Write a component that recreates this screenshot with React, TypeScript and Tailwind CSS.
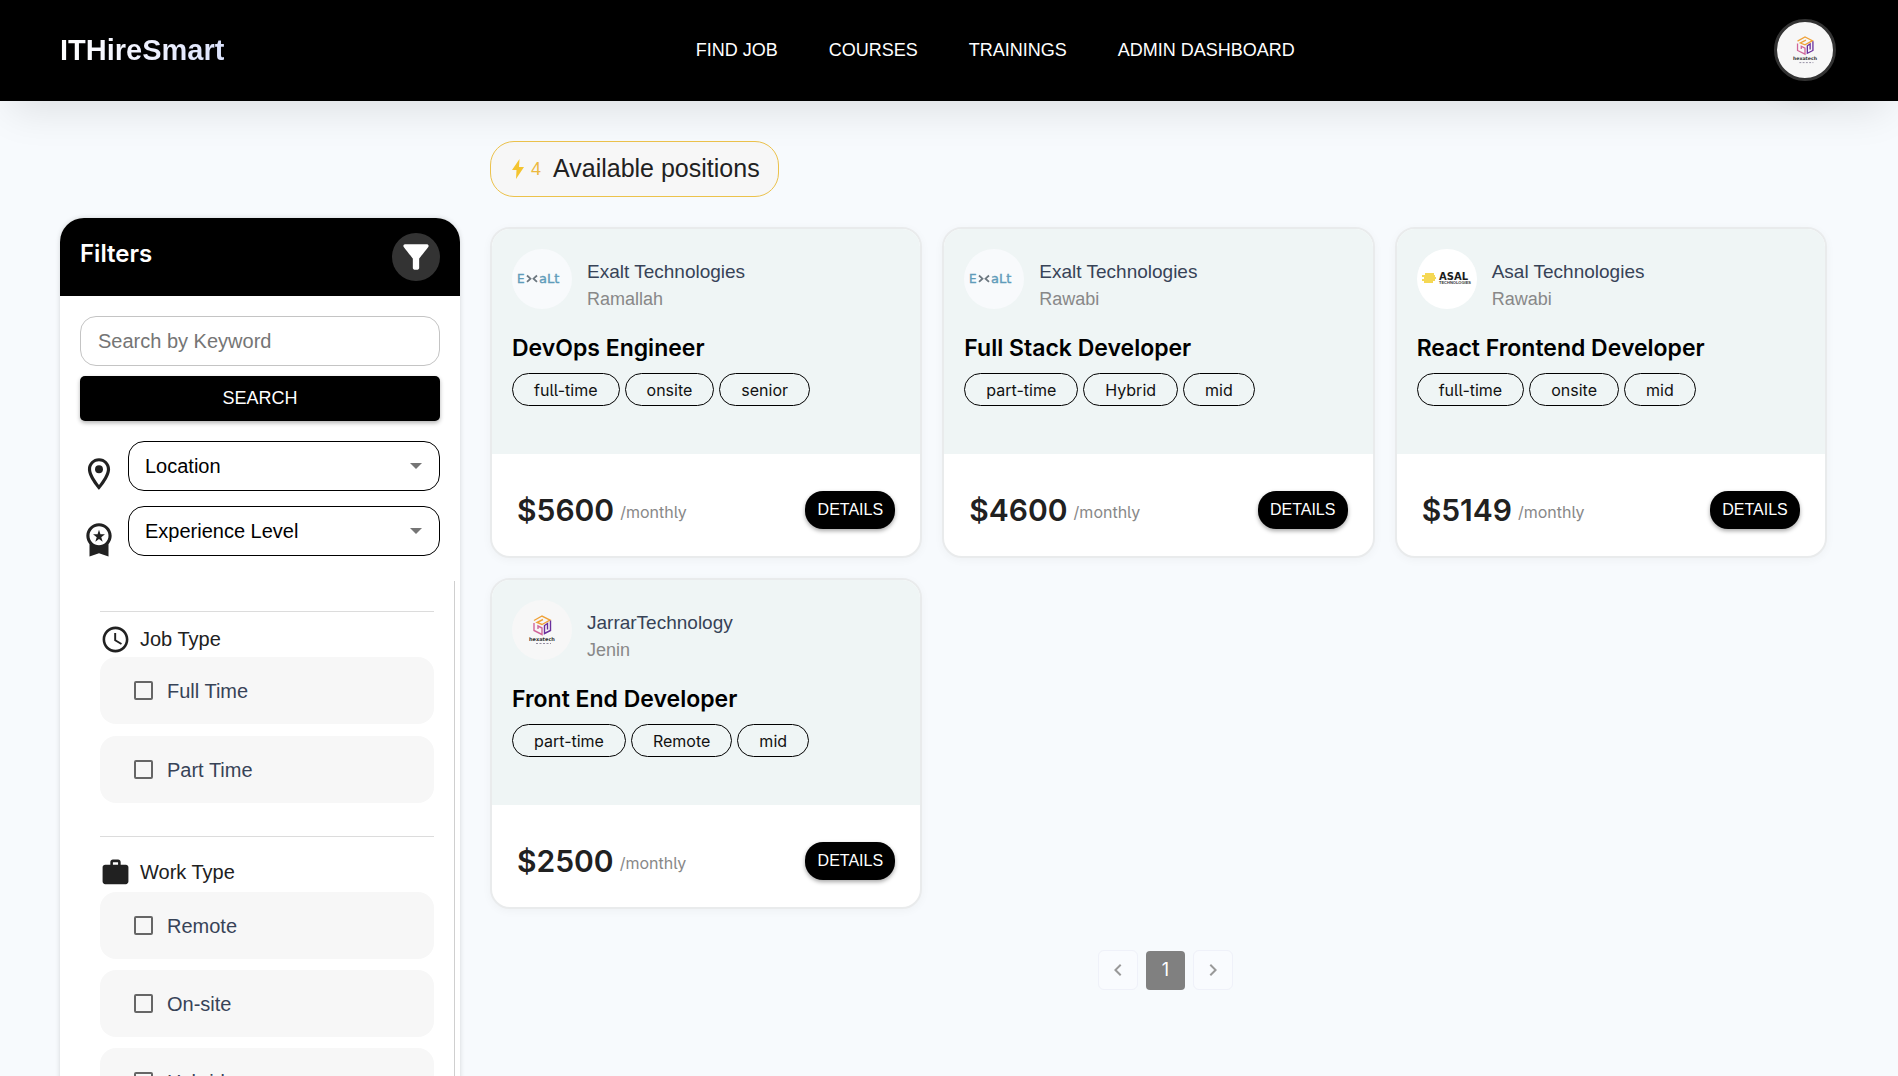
import React, { useId, useState } from "react";
import {
  MdAccessTime,
  MdChevronLeft,
  MdChevronRight,
  MdFilterAlt,
  MdOutlineLocationOn,
  MdWork,
} from "react-icons/md";

type LogoKind = "exalt" | "asal" | "hex";

interface Job {
  company: string;
  city: string;
  title: string;
  tags: string[];
  salary: number;
  logo: LogoKind;
}

const jobs: Job[] = [
  { company: "Exalt Technologies", city: "Ramallah", title: "DevOps Engineer", tags: ["full-time", "onsite", "senior"], salary: 5600, logo: "exalt" },
  { company: "Exalt Technologies", city: "Rawabi", title: "Full Stack Developer", tags: ["part-time", "Hybrid", "mid"], salary: 4600, logo: "exalt" },
  { company: "Asal Technologies", city: "Rawabi", title: "React Frontend Developer", tags: ["full-time", "onsite", "mid"], salary: 5149, logo: "asal" },
  { company: "JarrarTechnology", city: "Jenin", title: "Front End Developer", tags: ["part-time", "Remote", "mid"], salary: 2500, logo: "hex" },
];

const navItems = ["FIND JOB", "COURSES", "TRAININGS", "ADMIN DASHBOARD"];

function HexLogo() {
  return (
    <svg viewBox="0 0 60 60" className="size-full" aria-hidden="true">
      <g fill="none" strokeWidth="1.4">
        <path stroke="#efa23a" d="M22 20.500l8-4.500 8 4-8 4.500-5-2 6-3" />
        <path stroke="#d0669a" d="M22 23v7.500l8 4v-6.500l-4-2v3" />
        <path stroke="#6a2f9c" d="M38.500 20.500v10l-6 3v-8l3-2v6" />
      </g>
      <text x="30" y="41" textAnchor="middle" fontSize="5" fontWeight="700" fill="#333" fontFamily="DejaVu Sans, sans-serif">hexatech</text>
      <path stroke="#77708a" strokeWidth="0.8" strokeDasharray="2 1.5" d="M24 43.500h15" />
    </svg>
  );
}

function ExaltLogo() {
  return (
    <svg viewBox="0 0 60 60" className="size-full" aria-hidden="true">
      <text x="5" y="34" fontSize="12" fill="#5f9cba" stroke="#5f9cba" strokeWidth="0.4" fontFamily="DejaVu Sans, sans-serif">E</text>
      <g fill="none" stroke="#6d7880" strokeWidth="1.8">
        <path d="M15 26.500l3.500 3.200-3.500 3.200M25 26.500l-3.500 3.200 3.500 3.200" />
      </g>
      <text x="27" y="34" fontSize="13" fill="#5f9cba" stroke="#5f9cba" strokeWidth="0.4" fontFamily="DejaVu Sans, sans-serif">aLt</text>
    </svg>
  );
}

function AsalLogo() {
  return (
    <svg viewBox="0 0 60 60" className="size-full" aria-hidden="true">
      <path stroke="#f2cb1d" strokeWidth="1.7" d="M8 25h9M5 27h13M7 29h12M5 31h13M7 33h9" />
      <text x="22" y="31" fontSize="10" fontWeight="700" fill="#1c1c1c" fontFamily="DejaVu Sans, sans-serif">ASAL</text>
      <text x="22" y="35" fontSize="4" fontWeight="700" fill="#333" fontFamily="Liberation Sans, sans-serif">TECHNOLOGIES</text>
    </svg>
  );
}

function CompanyLogo({ kind }: { kind: LogoKind }) {
  const tone = kind === "asal" ? "bg-white" : kind === "exalt" ? "bg-[#f8fafc]" : "bg-[#f7f7f7]";
  return (
    <div className={`size-15 shrink-0 overflow-hidden rounded-full ${tone}`}>
      {kind === "exalt" && <ExaltLogo />}
      {kind === "asal" && <AsalLogo />}
      {kind === "hex" && <HexLogo />}
    </div>
  );
}

function AwardIcon() {
  return (
    <svg viewBox="0 0 24 24" className="size-[38px]" fill="currentColor" aria-hidden="true">
      <path d="M9.680 13.690 12 11.930l2.310 1.760-.88-2.850L15.750 9h-2.840L12 6.190 11.090 9H8.250l2.310 1.840-.88 2.850z" />
      <path fillRule="evenodd" d="M20 10c0-4.420-3.580-8-8-8s-8 3.580-8 8c0 2.030.76 3.870 2 5.280V23l6-2 6 2v-7.720c1.240-1.410 2-3.250 2-5.280zm-8-6c3.310 0 6 2.690 6 6s-2.690 6-6 6-6-2.690-6-6 2.690-6 6-6z" />
    </svg>
  );
}

function Header() {
  return (
    <header className="relative flex items-center justify-between bg-black pt-[19px] pr-[62px] pb-5 pl-[60px] shadow-[0_20px_40px_-10px_rgba(0,0,0,0.1)]">
      <a href="#" className="bg-linear-to-r from-white via-[#f0f2ff] to-[#dbe2fb] bg-clip-text text-[29px] leading-9 font-bold text-transparent">
        ITHireSmart
      </a>
      <nav className="flex gap-[51px] pr-2 text-lg text-white">
        {navItems.map((item) => (
          <a key={item} href="#">{item}</a>
        ))}
      </nav>
      <button type="button" aria-label="Account" className="size-[62px] overflow-hidden rounded-full border-3 border-[#333] bg-[#f7f7f7] shadow-[0_10px_30px_rgba(0,0,0,0.15)]">
        <HexLogo />
      </button>
    </header>
  );
}

function FilterSelect({ label, icon }: { label: string; icon: React.ReactNode }) {
  return (
    <div className="flex items-end justify-between">
      <span className="flex w-[38px] justify-center text-[#212121]">{icon}</span>
      <div className="relative mb-0.5 w-[312px]">
        <select aria-label={label} className="h-[50px] w-full appearance-none rounded-2xl border border-black bg-white px-4 text-xl text-black">
          <option>{label}</option>
        </select>
        <svg viewBox="0 0 12 6" className="pointer-events-none absolute top-[22px] right-[18px] h-[6px] w-3 fill-[#757575]" aria-hidden="true">
          <path d="M0 0l6 6 6-6z" />
        </svg>
      </div>
    </div>
  );
}

function CheckOption({ label }: { label: string }) {
  const id = useId();
  const [checked, setChecked] = useState(false);
  return (
    <div className="flex h-[67px] items-center gap-[14px] rounded-2xl bg-[#f7f7f7] pl-[34px]">
      <input
        id={id}
        type="checkbox"
        checked={checked}
        onChange={() => setChecked(!checked)}
        className="size-[19px] appearance-none rounded-xs border-2 border-[#666] checked:bg-[#666]"
      />
      <label htmlFor={id} className="text-xl text-[#374357]">{label}</label>
    </div>
  );
}

function Sidebar() {
  return (
    <aside className="mt-[117px] w-[400px] shrink-0 rounded-t-3xl bg-white shadow-[0_0_5px_rgba(0,0,0,0.15)]">
      <div className="flex h-[78px] items-center justify-between rounded-t-3xl bg-black px-5">
        <h2 className="pb-1.5 font-[Inter] text-2xl leading-8 font-semibold text-white">Filters</h2>
        <button type="button" aria-label="Toggle filters" className="flex size-12 items-center justify-center rounded-full bg-[#333] text-white">
          <MdFilterAlt size={38} />
        </button>
      </div>
      <form className="px-5 pt-5" onSubmit={(e) => e.preventDefault()}>
        <input
          type="text"
          aria-label="Search by Keyword"
          placeholder="Search by Keyword"
          className="h-[50px] w-full rounded-2xl border border-[#c4c4c4] px-[17px] text-xl placeholder:text-[#757575]"
        />
        <button type="submit" className="mt-[10px] h-[45px] w-full rounded-[5px] bg-black pb-0.5 text-lg text-white shadow-[0_2px_4px_rgba(0,0,0,0.3)]">
          SEARCH
        </button>
        <div className="mt-5 flex flex-col gap-[13px]">
          <FilterSelect label="Location" icon={<MdOutlineLocationOn size={38} />} />
          <FilterSelect label="Experience Level" icon={<AwardIcon />} />
        </div>
      </form>
      <div className="mt-[23px] mr-[5px] border-r border-[#cfcfcf] pt-[30px] pr-[20px] pl-10">
        <fieldset className="border-t border-[#dcdcdc]">
          <div className="flex h-[45px] items-end gap-[9px] pb-0.5 text-xl leading-8 text-[#212121]">
            <MdAccessTime size={31} />
            Job Type
          </div>
          <div className="flex flex-col gap-3 pb-[33px]">
            <CheckOption label="Full Time" />
            <CheckOption label="Part Time" />
          </div>
        </fieldset>
        <fieldset className="border-t border-[#dcdcdc]">
          <div className="flex h-[55px] items-end gap-[9px] pb-1 text-xl leading-8 text-[#212121]">
            <MdWork size={31} />
            Work Type
          </div>
          <div className="flex flex-col gap-[11px] pb-8">
            <CheckOption label="Remote" />
            <CheckOption label="On-site" />
            <CheckOption label="Hybrid" />
          </div>
        </fieldset>
      </div>
    </aside>
  );
}

function JobCard({ job }: { job: Job }) {
  return (
    <article className="overflow-hidden rounded-[20px] border-2 border-[#e9ebec] bg-white shadow-[0_2px_10px_rgba(0,0,0,0.04)]">
      <div className="bg-[#eff5f5] px-5 pt-5 pb-12">
        <div className="flex gap-[15px]">
          <CompanyLogo kind={job.logo} />
          <div className="pt-[10px] leading-[26px]">
            <p className="text-[19px] text-[#374357]">{job.company}</p>
            <p className="text-lg text-[#888]">{job.city}</p>
          </div>
        </div>
        <h3 className="mt-[18px] font-[Inter] text-[23px] leading-[34px] font-semibold text-black">{job.title}</h3>
        <ul className="mt-2 flex gap-[5px]">
          {job.tags.map((tag) => (
            <li key={tag} className="flex h-[33px] items-center rounded-full border border-black px-[21px] font-[Inter] text-base text-[#111] [font-feature-settings:'cv05']">
              {tag}
            </li>
          ))}
        </ul>
      </div>
      <div className="flex h-[102px] items-center justify-between px-[25px] pt-[9px]">
        <p className="flex items-center gap-[6px] font-[Inter] text-[#888] [font-feature-settings:'cv05']">
          <span className="text-3xl font-semibold text-[#212121]">${job.salary}</span>
          <span className="pt-1 text-base">/monthly</span>
        </p>
        <button type="button" className="h-[38px] w-[90px] rounded-[18px] bg-black text-base text-white shadow-[0_2px_4px_rgba(0,0,0,0.35)]">
          DETAILS
        </button>
      </div>
    </article>
  );
}

function Pagination() {
  const edge = "flex size-10 items-center justify-center rounded-md border border-[#eff1f9] bg-[#f9fbfe] text-[#999]";
  return (
    <nav aria-label="Pages" className="mt-[41px] flex items-center justify-center gap-2 pl-3.5">
      <button type="button" aria-label="Previous page" className={edge}><MdChevronLeft size={24} /></button>
      <button type="button" aria-current="page" className="size-[39px] rounded-sm bg-[#808080] font-[Inter] text-lg text-white">1</button>
      <button type="button" aria-label="Next page" className={edge}><MdChevronRight size={24} /></button>
    </nav>
  );
}

export default function App() {
  return (
    <div className="h-screen overflow-hidden bg-[#f7fafd] font-['Liberation_Sans',sans-serif]">
      <Header />
      <main className="flex items-start gap-[30px] pr-[71px] pl-[60px]">
        <Sidebar />
        <section className="min-w-0 grow pt-10">
          <div className="flex h-14 w-fit items-center rounded-3xl border border-[#ecc24c] bg-[#f7f7f7] pr-[18px] pl-[21px]">
            <svg viewBox="0 0 12 20" className="h-5 w-3 fill-[#f4c430]" aria-hidden="true">
              <path d="M7.500 0 0 11h4.500L4 20l8-12H7z" />
            </svg>
            <span className="ml-[7px] text-lg text-[#ecb93f]">4</span>
            <h1 className="ml-3 text-[25px] text-[#212121]">Available positions</h1>
          </div>
          <div className="mt-[30px] grid grid-cols-3 gap-5">
            {jobs.map((job) => (
              <JobCard key={job.title} job={job} />
            ))}
          </div>
          <Pagination />
        </section>
      </main>
    </div>
  );
}
